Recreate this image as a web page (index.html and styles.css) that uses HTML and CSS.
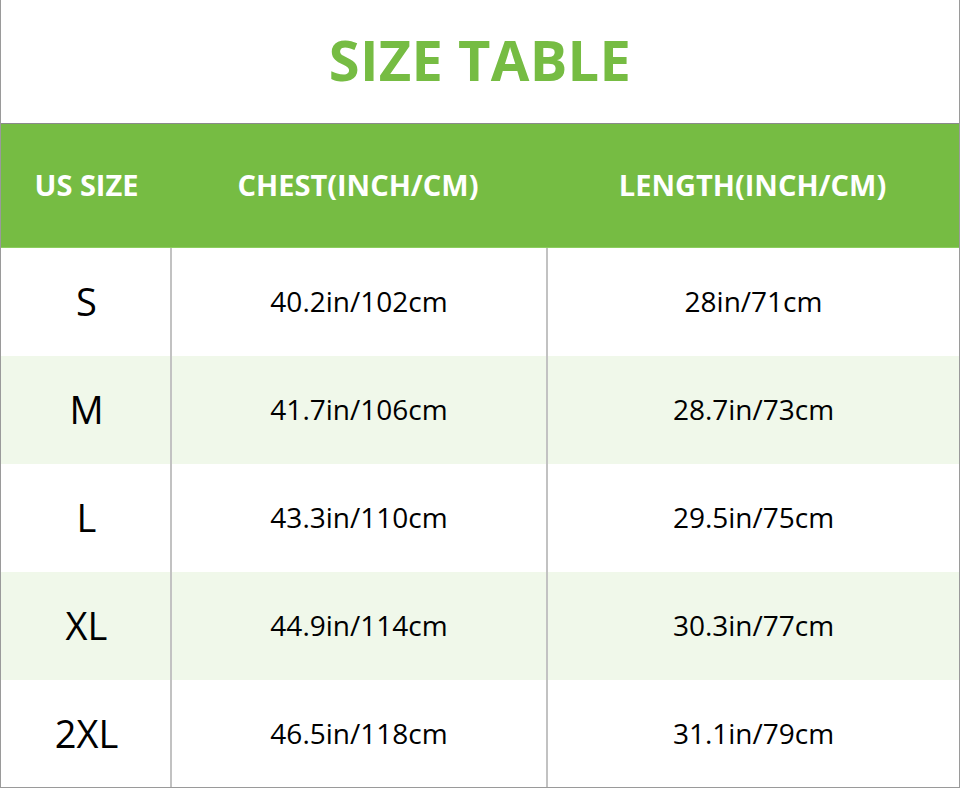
FILE: index.html
```html
<!DOCTYPE html>
<html>
<head>
<meta charset="utf-8">
<link rel="stylesheet" href="styles.css">
</head>
<body>
<div class="sheet">
  <div class="title">SIZE TABLE</div>
  <div class="table">
    <div class="row head">
      <div class="cell c1">US SIZE</div>
      <div class="cell c2">CHEST(INCH/CM)</div>
      <div class="cell c3">LENGTH(INCH/CM)</div>
    </div>
    <div class="row">
      <div class="cell c1 size">S</div>
      <div class="cell c2 sep">40.2in/102cm</div>
      <div class="cell c3 sep">28in/71cm</div>
    </div>
    <div class="row alt">
      <div class="cell c1 size">M</div>
      <div class="cell c2 sep">41.7in/106cm</div>
      <div class="cell c3 sep">28.7in/73cm</div>
    </div>
    <div class="row">
      <div class="cell c1 size">L</div>
      <div class="cell c2 sep">43.3in/110cm</div>
      <div class="cell c3 sep">29.5in/75cm</div>
    </div>
    <div class="row alt">
      <div class="cell c1 size">XL</div>
      <div class="cell c2 sep">44.9in/114cm</div>
      <div class="cell c3 sep">30.3in/77cm</div>
    </div>
    <div class="row last">
      <div class="cell c1 size">2XL</div>
      <div class="cell c2 sep">46.5in/118cm</div>
      <div class="cell c3 sep">31.1in/79cm</div>
    </div>
  </div>
</div>
</body>
</html>
```
FILE: styles.css
```css
* { box-sizing: border-box; }
html, body { margin: 0; padding: 0; background: #fff; }
body { font-family: "Open Sans", "Noto Sans", sans-serif; }
.sheet {
  width: 960px;
  height: 788px;
  border-left: 1px solid #9a9a9a;
  border-right: 1px solid #9a9a9a;
  border-bottom: 1px solid #9a9a9a;
  display: flex;
  flex-direction: column;
}
.title {
  height: 124px;
  border-bottom: 1px solid #8a8a8a;
  display: flex;
  align-items: center;
  justify-content: center;
  color: #76bc43;
  font-weight: 700;
  font-size: 56px;
  letter-spacing: 0.3px;
  padding-bottom: 5px;
}
.table { display: flex; flex-direction: column; flex: 1; }
.row {
  display: grid;
  grid-template-columns: 169px 376px 1fr;
  height: 108px;
}
.row.last { height: 107px; }
.row.alt { background: #f0f8ea; }
.row.head {
  height: 124px;
  background: #76bc43;
  border-bottom: 1px solid #8ccd5e;
  color: #fff;
  font-weight: 700;
  font-size: 29px;
}
.cell {
  display: flex;
  align-items: center;
  justify-content: center;
}
.row.head .cell { padding-bottom: 2px; }
.c1 { padding-left: 2px; }
.sep { border-left: 2px solid #c2c2c2; }
.row:not(.head) .cell { color: #000; font-size: 28px; padding-bottom: 2px; }
.row:not(.head) .cell.size { font-size: 38px; }
```
